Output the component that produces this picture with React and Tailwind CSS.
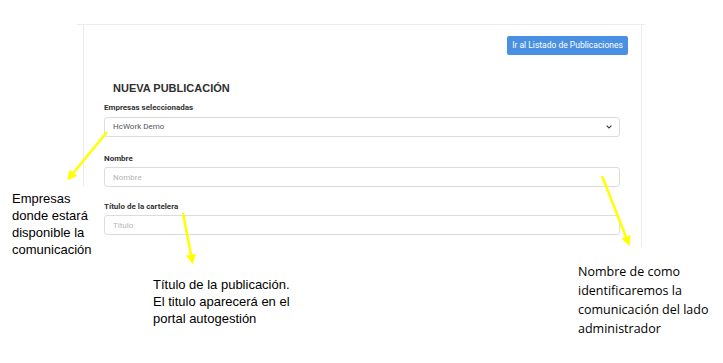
import React from 'react';

const Field = ({ label, placeholder, className = '' }) => (
  <div className={className}>
    <label className="block text-[8px] leading-[10px] font-bold text-[#333] mb-[3px]">{label}</label>
    <input
      placeholder={placeholder}
      className="block w-full h-[20px] px-[8px] text-[8px] border border-[#dcdcdc] rounded-[3px] outline-none text-[#555] placeholder:text-[#b5b5b5] bg-white"
    />
  </div>
);

const Arrow = ({ x1, y1, x2, y2 }) => (
  <line x1={x1} y1={y1} x2={x2} y2={y2} stroke="#ffff00" strokeWidth="2.5" markerEnd="url(#head)" />
);

export default function App() {
  return (
    <div className="relative w-[723px] h-[363px] bg-white overflow-hidden font-['Roboto',sans-serif]">
      {/* captured screen */}
      <div className="pt-[24px]">
        <div className="ml-[77px] w-[568px] h-px bg-[#ececec]" />
        <div className="ml-[83px] w-[559px] h-[222px] flex border-r border-[#ececec]">
          <div className="w-px h-[161px] bg-[#ececec] shrink-0" />
          <div className="flex-1 pl-[20px] pr-[13px] pt-[11px]">
            <div className="flex justify-end">
              <button className="w-[121px] h-[19px] rounded-[2px] bg-[#4a90e2] text-white text-[8.5px] leading-none">
                Ir al Listado de Publicaciones
              </button>
            </div>
            <div className="pr-[8px]">
              <h2 className="mt-[26px] ml-[9px] text-[11px] leading-[14px] font-bold text-[#2f2f2f] font-['Liberation_Sans',sans-serif]">
                NUEVA PUBLICACIÓN
              </h2>
              <div className="mt-[8px]">
                <label className="block text-[8px] leading-[10px] font-bold text-[#333] mb-[4px]">Empresas seleccionadas</label>
                <div className="h-[20px] px-[8px] flex items-center justify-between border border-[#dcdcdc] rounded-[3px] text-[8px] text-[#555]">
                  <span>HcWork Demo</span>
                  <svg width="6" height="4" viewBox="0 0 6 4" className="mr-[-1px]">
                    <path d="M0.6 0.6 L3 3 L5.4 0.6" fill="none" stroke="#444" strokeWidth="1.2" />
                  </svg>
                </div>
              </div>
              <Field label="Nombre" placeholder="Nombre" className="mt-[17px]" />
              <Field label="Título de la cartelera" placeholder="Titulo" className="mt-[15px]" />
            </div>
          </div>
        </div>
      </div>

      {/* annotations */}
      <div className="absolute left-[12px] top-[190px] text-[13px] leading-[17px] text-black font-['Liberation_Sans',sans-serif]">
        <div>Empresas</div>
        <div>donde estará</div>
        <div>disponible la</div>
        <div>comunicación</div>
      </div>
      <div className="absolute left-[153px] top-[276px] text-[13px] leading-[17px] text-black font-['Liberation_Sans',sans-serif]">
        <div>Título de la publicación.</div>
        <div>El titulo aparecerá en el</div>
        <div>portal autogestión</div>
      </div>
      <div className="absolute left-[578px] top-[262px] text-[12.5px] leading-[19px] text-black font-['Open_Sans',sans-serif]">
        <div>Nombre de como</div>
        <div>identificaremos la</div>
        <div>comunicación del lado</div>
        <div>administrador</div>
      </div>

      <svg className="absolute inset-0 pointer-events-none" width="723" height="363">
        <defs>
          <marker id="head" markerWidth="4" markerHeight="4" refX="2.2" refY="2" orient="auto" markerUnits="strokeWidth">
            <path d="M0 0 L4 2 L0 4 Z" fill="#ffff00" />
          </marker>
        </defs>
        <Arrow x1={107} y1={132} x2={70} y2={177} />
        <Arrow x1={183} y1={213} x2={192} y2={260} />
        <Arrow x1={602} y1={176} x2={628} y2={242} />
      </svg>
    </div>
  );
}
